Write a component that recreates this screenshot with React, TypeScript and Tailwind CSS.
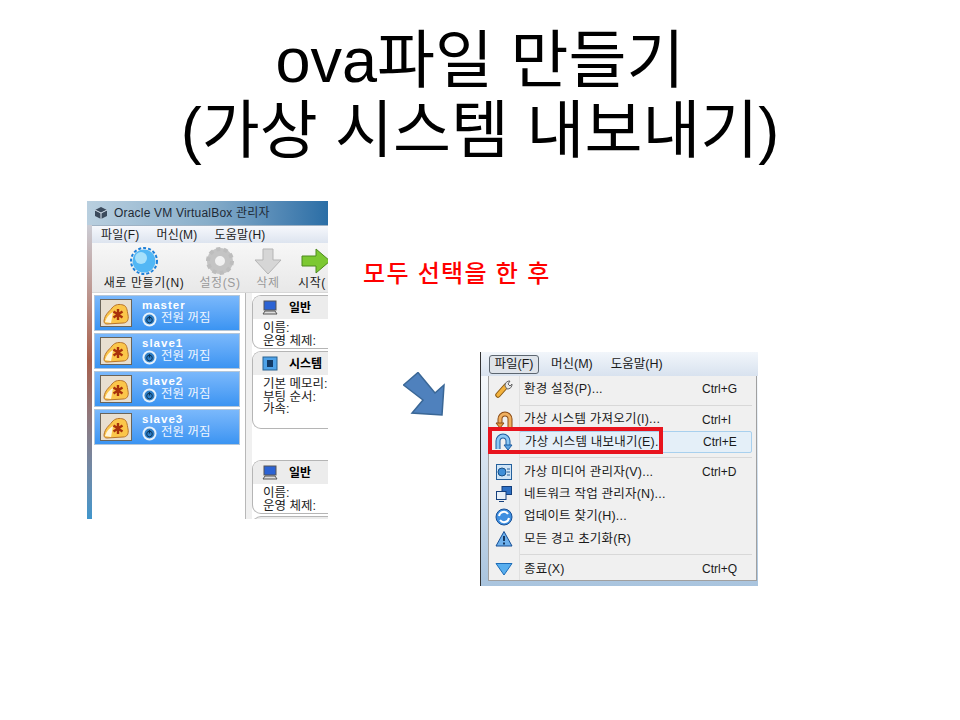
const cjk = "font-['Liberation_Sans','Noto_Sans_CJK_KR',sans-serif]";

const machines = ["master", "slave1", "slave2", "slave3"];

function VmBadge() {
  return (
    <div className="w-[32px] h-[28px] border border-[#6b6458] bg-[#e8dfd0] flex items-center justify-center shrink-0">
      <svg width="28" height="24" viewBox="0 0 28 24">
        <path d="M2 20 C3 13 7 11 10 7 C13 3 18 3 21 4 C25 5 25 9 26 14 C27 19 25 22 21 22 L5 23 C3 23 2 22 2 20Z" fill="#fbc64a" stroke="#b8742a" />
        <path d="M3 21 C5 15 8 13 11 11 L9 22Z" fill="#fff4d8" />
        <path d="M16 8 V19 M11.5 10.5 L20.5 16.5 M20.5 10.5 L11.5 16.5" stroke="#a8320c" strokeWidth="2.4" />
      </svg>
    </div>
  );
}

function MachineRow({ name }: { name: string }) {
  return (
    <div className="h-[36px] flex items-center gap-[10px] pl-[5px] border border-[#b4c6d8] bg-gradient-to-b from-[#7ab8fb] to-[#3a94f2]">
      <VmBadge />
      <div className="text-white mt-[2px]">
        <div className="font-bold text-[11.5px] leading-[8px] tracking-[1px]">{name}</div>
        <div className="flex items-center gap-[4px] text-[12.5px] leading-[12px] text-[#eef6ff]">
          <svg width="15" height="15" viewBox="0 0 15 15" className="mt-[3px]">
            <circle cx="7.5" cy="7.5" r="7" fill="#e8f2fb" />
            <circle cx="7.5" cy="7.5" r="5" fill="#2f7fc8" />
            <path d="M7.5 4 V7.5" stroke="#0c3558" strokeWidth="1.3" />
            <circle cx="7.5" cy="8" r="2.8" fill="none" stroke="#0c3558" />
          </svg>
          전원 꺼짐
        </div>
      </div>
    </div>
  );
}

function Monitor() {
  return (
    <svg width="16" height="15" viewBox="0 0 16 15">
      <rect x="2" y="1" width="12" height="9" fill="#2c63d4" stroke="#555" />
      <path d="M1 14 L3 11 H13 L15 14Z" fill="#ddd" stroke="#555" />
    </svg>
  );
}

function DetailCard({ title, lines, chip, h }: { title: string; lines: string[]; chip?: boolean; h: string }) {
  return (
    <div className={`${h} w-[90px] rounded-l-[9px] border border-r-0 border-[#b5b5b5] overflow-hidden shrink-0`}>
      <div className="h-[23px] bg-[#ececec] flex items-center gap-[11px] pl-[9px] text-[12px] font-bold text-black whitespace-nowrap">
        {chip ? (
          <svg width="16" height="15" viewBox="0 0 16 15">
            <rect x="1" y="1" width="14" height="13" fill="#4ea2e8" stroke="#27608f" />
            <rect x="5" y="4" width="6" height="7" fill="#123a66" />
          </svg>
        ) : (
          <Monitor />
        )}
        {title}
      </div>
      <div className="pl-[10px] pt-[3px] text-[12.5px] leading-[12.5px] text-[#222] whitespace-nowrap">
        {lines.map((l) => (
          <div key={l}>{l}</div>
        ))}
      </div>
    </div>
  );
}

function ToolButton({ label, muted, children, w }: { label: string; muted?: boolean; children: React.ReactNode; w: string }) {
  return (
    <div className={`${w} flex flex-col items-center shrink-0`}>
      <div className="h-[30px] flex items-center">{children}</div>
      <div className={`text-[12px] tracking-[0.6px] leading-[14px] whitespace-nowrap ${muted ? "text-[#9a9a9a]" : "text-[#1c1c1c]"}`}>{label}</div>
    </div>
  );
}

function ManagerWindow() {
  return (
    <div className="w-[241px] h-[318px] overflow-hidden flex flex-col bg-gradient-to-b from-[#cfe0ee] via-[#a8604c] to-[#3f96cc] shrink-0">
      {/* title bar */}
      <div className="h-[24px] flex items-center pl-[7px] gap-[6px] bg-gradient-to-r from-[#b9cfdf] via-[#88aeca] to-[#2a6ea6]">
        <svg width="14" height="14" viewBox="0 0 14 14">
          <path d="M7 1 L13 4 V10 L7 13 L1 10 V4Z" fill="#3b4a5c" />
          <path d="M7 7 L13 4 M7 7 L1 4 M7 7 V13" stroke="#dbe7f2" />
        </svg>
        <span className="text-[12px] tracking-[0.2px] text-[#1e2a36] whitespace-nowrap">Oracle VM VirtualBox 관리자</span>
      </div>
      <div className="flex-1 ml-[5px] flex flex-col bg-white min-h-0">
        {/* menu bar */}
        <div className="h-[18px] flex items-center gap-[17px] pl-[9px] bg-gradient-to-b from-[#f6f8fc] to-[#dde4ef] text-[12px] tracking-[0.2px] text-[#1c1c1c] border-t border-[#9fb2c4] whitespace-nowrap">
          <span>파일(F)</span>
          <span>머신(M)</span>
          <span>도움말(H)</span>
        </div>
        {/* toolbar */}
        <div className="h-[50px] flex items-start pl-[4px] pt-[3px] bg-gradient-to-b from-[#f7f7f7] to-[#e8e8e8] border-b border-[#d8d8d8] overflow-hidden">
          <ToolButton label="새로 만들기(N)" w="w-[96px]">
            <svg width="30" height="28" viewBox="0 0 30 28">
              <circle cx="15" cy="14" r="13" fill="none" stroke="#1c7fd8" strokeWidth="2" strokeDasharray="3 2" />
              <circle cx="15" cy="14" r="11.5" fill="#52b7f5" />
              <circle cx="12" cy="11" r="6" fill="#a6e0fb" />
            </svg>
          </ToolButton>
          <ToolButton label="설정(S)" muted w="w-[56px]">
            <svg width="30" height="28" viewBox="0 0 30 28">
              <circle cx="15" cy="14" r="9" fill="none" stroke="#c4c4c4" strokeWidth="8" />
              <circle cx="15" cy="14" r="12" fill="none" stroke="#bdbdbd" strokeWidth="4" strokeDasharray="4 3.5" />
            </svg>
          </ToolButton>
          <ToolButton label="삭제" muted w="w-[40px]">
            <svg width="28" height="28" viewBox="0 0 28 28">
              <path d="M9 2 H19 V13 H27 L14 27 L1 13 H9Z" fill="#d6d6d6" stroke="#b5b5b5" />
            </svg>
          </ToolButton>
          <ToolButton label="시작(" w="w-[48px]">
            <svg width="30" height="26" viewBox="0 0 30 26" className="ml-[8px]">
              <path d="M1 8 H15 V1 L29 13 L15 25 V18 H1Z" fill="#7cc832" stroke="#4c8a1c" />
            </svg>
          </ToolButton>
        </div>
        {/* body */}
        <div className="flex-1 flex min-h-0 pl-[2px]">
          <div className="w-[146px] pt-[2px] flex flex-col gap-[2px] shrink-0">
            {machines.map((m) => (
              <MachineRow key={m} name={m} />
            ))}
          </div>
          <div className="ml-[5px] w-[7px] border-l border-[#b8b8b8] bg-[#f0f0f0] shrink-0" />
          <div className="flex flex-col pt-[2px] gap-[2px] overflow-hidden">
            <DetailCard title="일반" lines={["이름:", "운영 체제:"]} h="h-[54px]" />
            <DetailCard title="시스템" chip lines={["기본 메모리:", "부팅 순서:", "가속:"]} h="h-[78px]" />
            <div className="h-[27px] shrink-0" />
            <DetailCard title="일반" lines={["이름:", "운영 체제:"]} h="h-[54px]" />
            <div className="h-[12px] w-[90px] rounded-tl-[9px] border border-r-0 border-b-0 border-[#b5b5b5] bg-[#ececec] shrink-0" />
          </div>
        </div>
      </div>
    </div>
  );
}

const icons: Record<string, React.ReactNode> = {
  wrench: (
    <svg width="18" height="18" viewBox="0 0 18 18">
      <path d="M3 15 L11 6" stroke="#8a5a14" strokeWidth="5.5" strokeLinecap="round" />
      <path d="M3 15 L11 6" stroke="#f3b23c" strokeWidth="3.5" strokeLinecap="round" />
      <path d="M10 6 A4.5 4.5 0 0 1 15 1 L13 4 L15 6 L17 4 A4.5 4.5 0 0 1 12 9Z" fill="#e8e8e8" stroke="#666" />
    </svg>
  ),
  importVm: (
    <svg width="18" height="18" viewBox="0 0 18 18">
      <path d="M5 14 V8 A5 5 0 0 1 15 8 V16" fill="none" stroke="#8a4a14" strokeWidth="5" />
      <path d="M5 14 V8 A5 5 0 0 1 15 8 V16" fill="none" stroke="#f0b060" strokeWidth="3" />
      <path d="M1 12 L5 17 L9 12Z" fill="#e89a3c" stroke="#8a4a14" />
    </svg>
  ),
  exportVm: (
    <svg width="18" height="18" viewBox="0 0 18 18">
      <path d="M3 16 V8 A5 5 0 0 1 13 8 V13" fill="none" stroke="#1c5ca0" strokeWidth="5" />
      <path d="M3 16 V8 A5 5 0 0 1 13 8 V13" fill="none" stroke="#8cc8f4" strokeWidth="3" />
      <path d="M9 12 L13 17 L17 12Z" fill="#5aa4e4" stroke="#1c5ca0" />
    </svg>
  ),
  media: (
    <svg width="18" height="18" viewBox="0 0 18 18">
      <rect x="1.5" y="1.5" width="15" height="15" fill="#cfe4f6" stroke="#24609c" />
      <circle cx="7" cy="9" r="4" fill="#3f8fd8" stroke="#174f86" />
      <path d="M12 6 H15 M12 9 H15 M12 12 H15" stroke="#24609c" />
    </svg>
  ),
  network: (
    <svg width="18" height="18" viewBox="0 0 18 18">
      <rect x="7" y="1.5" width="9.5" height="8" fill="#2c6fc4" stroke="#143f7c" />
      <rect x="1.5" y="6.5" width="9.5" height="8" fill="#e8f0f8" stroke="#143f7c" />
      <path d="M4 16.5 H9" stroke="#143f7c" />
    </svg>
  ),
  update: (
    <svg width="18" height="18" viewBox="0 0 18 18">
      <circle cx="9" cy="9" r="8" fill="#3f8fe0" stroke="#174f96" />
      <path d="M4 8 A5 5 0 0 1 13 6 M14 10 A5 5 0 0 1 5 12" fill="none" stroke="#fff" strokeWidth="2" />
    </svg>
  ),
  warn: (
    <svg width="18" height="18" viewBox="0 0 18 18">
      <path d="M9 1.5 L17 16 H1Z" fill="#6db0ec" stroke="#174f96" />
      <path d="M9 6 V11 M9 12.5 V14.5" stroke="#0c2a52" strokeWidth="1.8" />
    </svg>
  ),
  quit: (
    <svg width="18" height="14" viewBox="0 0 18 14">
      <path d="M1 1.5 H17 L9 13Z" fill="#58aeee" stroke="#1c6cb8" />
    </svg>
  ),
};

function MenuItem({ icon, label, shortcut, h, hover }: { icon: string; label: string; shortcut?: string; h: string; hover?: boolean }) {
  return (
    <div className={`${h} flex items-center`}>
      <div className="w-[30px] flex justify-center shrink-0">{icons[icon]}</div>
      <div className={`flex-1 flex items-center self-stretch pl-[5px] mr-[4px] rounded-[2px] ${hover ? "border border-[#a8d0ee] bg-[#e4eff8] pl-[4px]" : ""}`}>
        <span className="w-[178px] whitespace-nowrap tracking-[0.2px]">{label}</span>
        {shortcut && <span className="whitespace-nowrap text-[12px]">{shortcut}</span>}
      </div>
    </div>
  );
}

function Sep({ h }: { h: string }) {
  return (
    <div className={`${h} flex items-center pl-[30px] pr-[4px]`}>
      <div className="h-px w-full bg-[#d8d8d8]" />
    </div>
  );
}

function FileMenu() {
  return (
    <div className="relative w-[278px] h-[234px] border-l border-[#333] bg-gradient-to-b from-white to-[#a9c4de] overflow-hidden text-[12.5px] text-[#1a1a1a] shrink-0">
      <div className="h-[24px] flex items-center gap-[15px] pl-[8px] bg-gradient-to-b from-[#f2f6fb] to-[#d8e2ef] whitespace-nowrap">
        <span className="h-[19px] w-[50px] flex items-center justify-center border border-[#5c6670] rounded-[3px] bg-[#dfe4ea] -mr-[3px]">파일(F)</span>
        <span>머신(M)</span>
        <span className="ml-[3px]">도움말(H)</span>
      </div>
      <div className="ml-[7px] mr-[1px] border border-t-0 border-[#a0a0a0] bg-[#f0f0f0] relative">
        <div className="absolute left-[30px] top-0 bottom-0 w-px bg-[#e0e0e0]" />
        <MenuItem icon="wrench" label="환경 설정(P)..." shortcut="Ctrl+G" h="h-[26px]" />
        <Sep h="h-[6px]" />
        <MenuItem icon="importVm" label="가상 시스템 가져오기(I)..." shortcut="Ctrl+I" h="h-[23px]" />
        <MenuItem icon="exportVm" label="가상 시스템 내보내기(E)." shortcut="Ctrl+E" h="h-[22px]" hover />
        <Sep h="h-[8px]" />
        <MenuItem icon="media" label="가상 미디어 관리자(V)..." shortcut="Ctrl+D" h="h-[22px]" />
        <MenuItem icon="network" label="네트워크 작업 관리자(N)..." h="h-[22px]" />
        <MenuItem icon="update" label="업데이트 찾기(H)..." h="h-[23px]" />
        <MenuItem icon="warn" label="모든 경고 초기화(R)" h="h-[22px]" />
        <Sep h="h-[8px]" />
        <MenuItem icon="quit" label="종료(X)" shortcut="Ctrl+Q" h="h-[22px]" />
      </div>
      {/* red highlight drawn over the screenshot */}
      <div className="absolute left-[7px] top-[75px] w-[175px] h-[27px] border-[4px] border-[#e8141e]" />
    </div>
  );
}

export default function App() {
  return (
    <div className={`w-[960px] h-[720px] bg-white overflow-hidden ${cjk}`}>
      <h1 className="pt-[25px] h-[201px] text-center text-[63px] leading-[70px] font-normal text-black whitespace-nowrap">
        ova파일 만들기
        <br />
        (가상 시스템 내보내기)
      </h1>
      <div className="flex pl-[87px]">
        <ManagerWindow />
        <div className="ml-[35px] flex flex-col">
          <div className="mt-[58px] text-[24px] leading-[30px] tracking-[1.3px] font-medium text-[#ff0000] whitespace-nowrap">모두 선택을 한 후</div>
          <div className="flex items-start mt-[63px]">
            <svg width="44" height="44" viewBox="0 0 44 44" className="ml-[40px] mt-[20px] shrink-0">
              <path d="M0.5 13 L15 0.5 L32 21 L41 13 L39 43 L9 41 L20 28Z" fill="#4f81bd" stroke="#3a6796" strokeWidth="1.5" />
            </svg>
            <div className="ml-[33px]">
              <FileMenu />
            </div>
          </div>
        </div>
      </div>
    </div>
  );
}
